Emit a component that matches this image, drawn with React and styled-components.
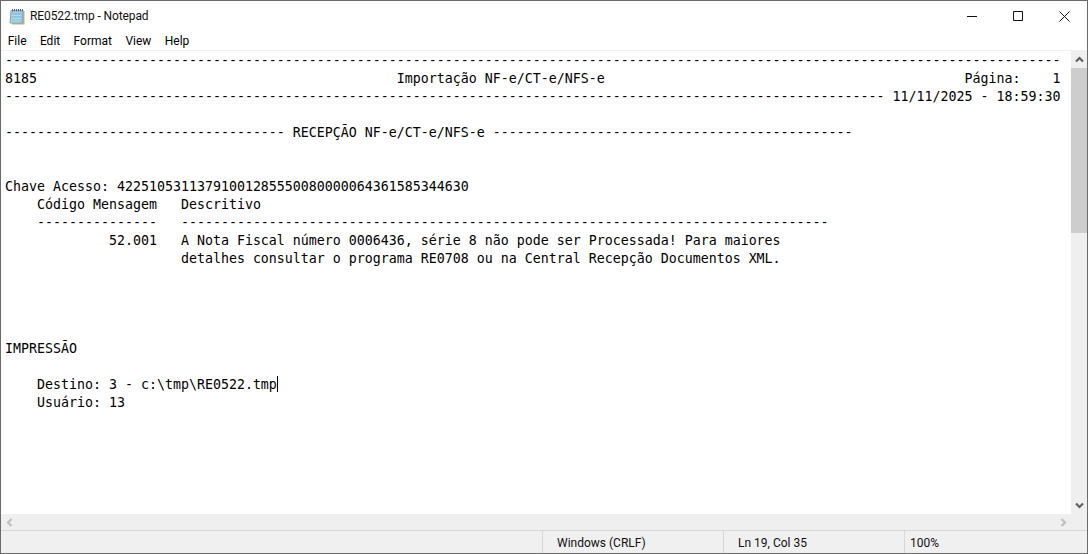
import styled, { createGlobalStyle } from 'styled-components';

const LINES = [
  '-'.repeat(132),
  '8185' + ' '.repeat(45) + 'Importação NF-e/CT-e/NFS-e' + ' '.repeat(45) + 'Página:    1',
  '-'.repeat(110) + ' 11/11/2025 - 18:59:30',
  '',
  '-'.repeat(35) + ' RECEPÇÃO NF-e/CT-e/NFS-e ' + '-'.repeat(45),
  '',
  '',
  'Chave Acesso: 42251053113791001285550080000064361585344630',
  '    Código Mensagem   Descritivo',
  '    ' + '-'.repeat(15) + '   ' + '-'.repeat(81),
  '             52.001   A Nota Fiscal número 0006436, série 8 não pode ser Processada! Para maiores',
  '                      detalhes consultar o programa RE0708 ou na Central Recepção Documentos XML.',
  '',
  '',
  '',
  '',
  'IMPRESSÃO',
  '',
];

const MENU = ['File', 'Edit', 'Format', 'View', 'Help'];

function NotepadIcon() {
  return (
    <svg width="16" height="17" viewBox="0 0 16 17">
      <path d="M4 3h11.5v13.5H3z" fill="#c8ad78" />
      <path d="M2 2.5h12l-.6 12.5H1z" fill="#a9d6e8" stroke="#7fa9bf" />
      <path d="M2.6 4.5h10.6l-.5 10H2z" fill="#8fc6dd" />
      <path d="M2.6 7.5h10M2.4 10.5h10M2.2 13h10" stroke="#b5dcec" />
      <path d="M3.5 1v2.5M5.5 1v2.5M7.5 1v2.5M9.5 1v2.5M11.5 1v2.5M13.5 1v2.5" stroke="#56656f" />
    </svg>
  );
}

function Chevron({ dir, light }) {
  const rot = { up: 0, right: 90, down: 180, left: 270 }[dir];
  return (
    <svg width="9" height="9" viewBox="0 0 9 9" style={{ transform: `rotate(${rot}deg)` }}>
      <path
        d="M1 6.5L4.5 3 8 6.5"
        fill="none"
        stroke={light ? '#c0c0c0' : '#606060'}
        strokeWidth="2.2"
      />
    </svg>
  );
}

function App() {
  return (
    <Window>
      <GlobalStyle />
      <TitleBar>
        <TitleIcon>
          <NotepadIcon />
        </TitleIcon>
        <Title>RE0522.tmp - Notepad</Title>
        <Controls>
          <ControlButton>
            <svg width="10" height="10" viewBox="0 0 10 10">
              <path d="M0 5.5h10" stroke="#111" />
            </svg>
          </ControlButton>
          <ControlButton>
            <svg width="10" height="10" viewBox="0 0 10 10">
              <path d="M.5.5h9v9h-9z" fill="none" stroke="#111" />
            </svg>
          </ControlButton>
          <ControlButton>
            <svg width="11" height="11" viewBox="0 0 11 11">
              <path d="M.5.5l10 10M10.5.5l-10 10" stroke="#111" />
            </svg>
          </ControlButton>
        </Controls>
      </TitleBar>
      <MenuBar>
        {MENU.map((item) => (
          <MenuItem key={item}>{item}</MenuItem>
        ))}
      </MenuBar>
      <Editor>
        <TextArea>
          {LINES.map((line, i) => (
            <Line key={i}>{line}</Line>
          ))}
          <Line>
            {'    Destino: 3 - c:\\tmp\\RE0522.tmp'}
            <Caret />
          </Line>
          <Line>{'    Usuário: 13'}</Line>
        </TextArea>
        <VScroll>
          <ArrowButton>
            <Chevron dir="up" />
          </ArrowButton>
          <VTrack>
            <VThumb />
          </VTrack>
          <ArrowButton>
            <Chevron dir="down" />
          </ArrowButton>
        </VScroll>
      </Editor>
      <HScroll>
        <ArrowButton>
          <Chevron dir="left" light />
        </ArrowButton>
        <HSpacer />
        <ArrowButton>
          <Chevron dir="right" light />
        </ArrowButton>
        <ScrollCorner />
      </HScroll>
      <StatusBar>
        <StatusCell $width={181}>Windows (CRLF)</StatusCell>
        <StatusCell $width={181}>Ln 19, Col 35</StatusCell>
        <StatusCell $width={181} $pad={5}>100%</StatusCell>
        <Grip>
          <svg width="8" height="8" viewBox="0 0 8 8" fill="#bdbdbd">
            <path d="M6 0h2v2H6zM3 3h2v2H3zM6 3h2v2H6zM0 6h2v2H0zM3 6h2v2H3zM6 6h2v2H6z" />
          </svg>
        </Grip>
      </StatusBar>
    </Window>
  );
}

export default App;

const GlobalStyle = createGlobalStyle`
  html, body {
    margin: 0;
    padding: 0;
    background: #fff;
  }
`;

const Window = styled.div`
  display: flex;
  flex-direction: column;
  box-sizing: border-box;
  width: 1088px;
  height: 554px;
  border: 1px solid #6b6b6b;
  background: #fff;
  color: #000;
  font-family: Roboto, "Noto Sans", sans-serif;
  font-size: 12px;
  overflow: hidden;
`;

const TitleBar = styled.div`
  display: flex;
  align-items: center;
  flex: none;
  height: 30px;
`;

const TitleIcon = styled.span`
  display: flex;
  margin-left: 8px;
  margin-right: 5px;
`;

const Title = styled.span`
  flex: 1;
  color: #111;
  letter-spacing: -0.1px;
`;

const Controls = styled.div`
  display: flex;
  height: 100%;
`;

const ControlButton = styled.div`
  display: flex;
  align-items: center;
  justify-content: center;
  width: 46px;
`;

const MenuBar = styled.div`
  display: flex;
  flex: none;
  align-items: center;
  box-sizing: content-box;
  height: 18px;
  padding-top: 1px;
  border-bottom: 1px solid #f0f0f0;
`;

const MenuItem = styled.span`
  padding: 0 6.7px;
`;

const Editor = styled.div`
  display: flex;
  flex: 1;
  min-height: 0;
`;

const TextArea = styled.div`
  flex: 1;
  padding: 1px 0 0 4px;
  font-family: "DejaVu Sans Mono", "Liberation Mono", monospace;
  font-size: 13.295px;
  line-height: 18px;
  color: #000;
  overflow: hidden;
`;

const Line = styled.div`
  height: 18px;
  white-space: pre;
`;

const Caret = styled.span`
  display: inline-block;
  width: 1px;
  height: 16px;
  margin-bottom: -3px;
  background: #000;
`;

const VScroll = styled.div`
  display: flex;
  flex-direction: column;
  flex: none;
  width: 16px;
  background: #efefef;
`;

const ArrowButton = styled.div`
  display: flex;
  align-items: center;
  justify-content: center;
  flex: none;
  width: 16px;
  height: 17px;
`;

const VTrack = styled.div`
  flex: 1;
`;

const VThumb = styled.div`
  height: 165px;
  background: #cdcdcd;
`;

const HScroll = styled.div`
  display: flex;
  flex: none;
  height: 16px;
  background: #efefef;
`;

const HSpacer = styled.div`
  flex: 1;
`;

const ScrollCorner = styled.div`
  flex: none;
  width: 16px;
`;

const StatusBar = styled.div`
  display: flex;
  flex: none;
  justify-content: flex-end;
  align-items: stretch;
  box-sizing: content-box;
  height: 22px;
  padding-right: 1px;
  border-top: 1px solid #d7d7d7;
  background: #f0f0f0;
  color: #111;
`;

const StatusCell = styled.div`
  display: flex;
  align-items: center;
  box-sizing: border-box;
  width: ${(p) => p.$width}px;
  padding-top: 1px;
  padding-left: ${(p) => p.$pad || 14}px;
  border-left: 1px solid #d7d7d7;
`;

const Grip = styled.div`
  display: flex;
  align-items: flex-end;
  justify-content: flex-end;
  width: 0;
  padding-bottom: 1px;
  margin-right: 1px;
`;
